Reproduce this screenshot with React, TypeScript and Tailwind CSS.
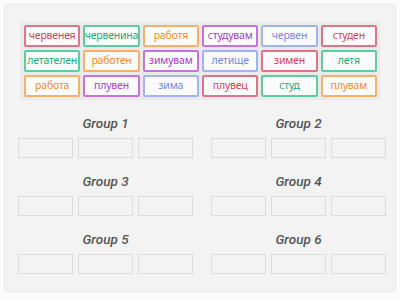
const RED = "border-[#dc7686] text-[#d6405a]";
const GREEN = "border-[#5fcba3] text-[#1fa877]";
const ORANGE = "border-[#f5b06c] text-[#f08a2a]";
const PURPLE = "border-[#c474dc] text-[#a83bc9]";
const BLUE = "border-[#a0b4ef] text-[#6f8ce6]";

const words: { text: string; color: string }[] = [
  { text: "червенея", color: RED },
  { text: "червенина", color: GREEN },
  { text: "работя", color: ORANGE },
  { text: "студувам", color: PURPLE },
  { text: "червен", color: BLUE },
  { text: "студен", color: RED },
  { text: "летателен", color: GREEN },
  { text: "работен", color: ORANGE },
  { text: "зимувам", color: PURPLE },
  { text: "летище", color: BLUE },
  { text: "зимен", color: RED },
  { text: "летя", color: GREEN },
  { text: "работа", color: ORANGE },
  { text: "плувен", color: PURPLE },
  { text: "зима", color: BLUE },
  { text: "плувец", color: RED },
  { text: "студ", color: GREEN },
  { text: "плувам", color: ORANGE },
];

function Group({ n }: { n: number }) {
  return (
    <div className="flex flex-col items-center">
      <div className="h-[20px] flex items-center text-[13.5px] italic font-medium text-[#555] font-['Roboto',sans-serif]">
        Group {n}
      </div>
      <div className="flex gap-[5px] mt-[5px]">
        {[0, 1, 2].map((i) => (
          <div key={i} className="w-[55px] h-[20px] border border-[#dddcdd] bg-[#f4f3f4]" />
        ))}
      </div>
    </div>
  );
}

export default function App() {
  return (
    <div className="w-[400px] h-[300px] bg-[#fbfbfb] p-[4px] overflow-hidden">
      <div className="h-[288px] border border-[#ebeaeb] bg-[#f4f3f4] flex flex-col items-center">
        <div className="mt-[17px] w-[360px] bg-[#ebeaeb] p-[3px] pl-[4px]">
          <div className="grid grid-cols-6 gap-x-[3px] gap-y-[3px]">
            {words.map((w) => (
              <div
                key={w.text}
                className={`h-[22px] rounded-[2px] border-2 bg-[#fbfbfb] flex items-center justify-center text-[10.5px] tracking-[-0.2px] font-['Noto_Sans',sans-serif] ${w.color}`}
              >
                {w.text}
              </div>
            ))}
          </div>
        </div>
        <div className="mt-[13px] grid grid-cols-2 gap-x-[18px] gap-y-[13px] ml-[4px]">
          {[1, 2, 3, 4, 5, 6].map((n) => (
            <Group key={n} n={n} />
          ))}
        </div>
      </div>
    </div>
  );
}
